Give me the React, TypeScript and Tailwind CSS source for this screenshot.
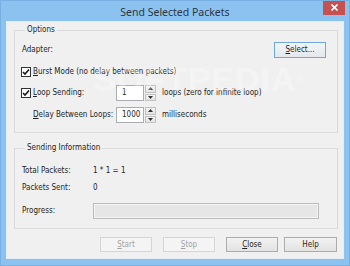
import React from 'react';

const font = "font-['DejaVu_Sans_Condensed','Liberation_Sans',sans-serif]";

const Check = () => (
  <span className="w-[10px] h-[10px] border border-[#333333] bg-white flex items-center justify-center shrink-0">
    <svg width="8" height="8" viewBox="0 0 8 8">
      <path d="M1 4 L3 6 L7 1.5" fill="none" stroke="#1a1a1a" strokeWidth="1.6" />
    </svg>
  </span>
);

const Spin = ({ value }: { value: string }) => (
  <div className="flex h-[16px] w-[40px] shrink-0">
    <div className="flex-1 border border-[#abadb3] bg-white pl-[5px] flex items-center text-[#1e1e1e]">{value}</div>
    <div className="w-[11px] ml-[1px] flex flex-col gap-[1px]">
      <div className="flex-1 border border-[#c2c2c2] bg-gradient-to-b from-[#f4f4f4] to-[#e4e4e4] flex items-center justify-center">
        <svg width="5" height="3" viewBox="0 0 5 3"><path d="M0 3 L2.5 0 L5 3 Z" fill="#333" /></svg>
      </div>
      <div className="flex-1 border border-[#c2c2c2] bg-gradient-to-b from-[#f4f4f4] to-[#e4e4e4] flex items-center justify-center">
        <svg width="5" height="3" viewBox="0 0 5 3"><path d="M0 0 L5 0 L2.5 3 Z" fill="#333" /></svg>
      </div>
    </div>
  </div>
);

const Button = ({ children, disabled, className = '' }: { children: React.ReactNode; disabled?: boolean; className?: string }) => (
  <div
    className={`h-[15px] w-[52px] flex items-center justify-center border ${
      disabled
        ? 'border-[#d5d5d5] bg-[#f4f4f4] text-[#a3a3a3]'
        : 'border-[#acacac] bg-gradient-to-b from-[#f2f2f2] to-[#e3e3e3] text-[#1e1e1e]'
    } ${className}`}
  >
    {children}
  </div>
);

export default function App() {
  return (
    <div className={`w-[350px] h-[266px] bg-[#8cc2f0] border border-[#78b0e4] flex flex-col text-[8px] leading-[10px] text-[#1e1e1e] relative overflow-hidden ${font}`}>
      {/* title bar */}
      <div className="h-[20px] grid grid-cols-[1fr_auto_1fr]">
        <div />
        <div className="font-['Noto_Sans',sans-serif] text-[10.5px] leading-[20px] text-[#2d3640] pt-[1px]">Send Selected Packets</div>
        <div className="flex justify-end items-start pr-[4px] -mt-[1px]">
          <div className="w-[22px] h-[15px] bg-[#c75050] flex items-center justify-center">
            <svg width="7" height="7" viewBox="0 0 7 7">
              <path d="M0.5 0.5 L6.5 6.5 M6.5 0.5 L0.5 6.5" stroke="#ffffff" strokeWidth="1.6" />
            </svg>
          </div>
        </div>
      </div>

      {/* client area */}
      <div className="mx-[5px] mb-[6px] flex-1 bg-[#f0f0f0] border border-[#e4edf6] flex flex-col">
        <fieldset className="ml-[7px] mr-[5px] mt-[2px] border border-[#dadada] pl-[7px] pr-[11px] pb-[9px]">
          <legend className="ml-[3px] px-[2px] leading-[12px]">Options</legend>
          <div className="mt-[6px] h-[16px] flex items-center justify-between">
            <span>Adapter:</span>
            <div className="h-[16px] w-[52px] border border-[#6fa8e0] bg-gradient-to-b from-[#f3f6f9] to-[#e4e8ec] flex items-center justify-center">
              <span><span className="underline">S</span>elect...</span>
            </div>
          </div>
          <div className="mt-[6px] h-[16px] flex items-center gap-[2px] -ml-[1px]">
            <Check />
            <span><span className="underline">B</span>urst Mode (no delay between packets)</span>
          </div>
          <div className="mt-[5px] h-[16px] flex items-center">
            <div className="w-[95px] flex items-center gap-[2px] -ml-[1px]">
              <Check />
              <span><span className="underline">L</span>oop Sending:</span>
            </div>
            <Spin value="1" />
            <span className="ml-[6px]">loops (zero for infinite loop)</span>
          </div>
          <div className="mt-[6px] h-[16px] flex items-center">
            <div className="w-[94px] pl-[11px]">
              <span className="underline">D</span>elay Between Loops:
            </div>
            <Spin value="1000" />
            <span className="ml-[6px]">milliseconds</span>
          </div>
        </fieldset>

        <fieldset className="ml-[7px] mr-[5px] mt-[9px] border border-[#dadada] pl-[7px] pb-[9px]">
          <legend className="ml-[3px] px-[2px] leading-[12px]">Sending Information</legend>
          <div className="mt-[9px] h-[16px] flex items-center">
            <span className="w-[71px]">Total Packets:</span>
            <span>1 * 1 = 1</span>
          </div>
          <div className="mt-[1px] h-[16px] flex items-center">
            <span className="w-[71px]">Packets Sent:</span>
            <span>0</span>
          </div>
          <div className="mt-[7px] h-[16px] flex items-center">
            <span className="w-[71px]">Progress:</span>
            <div className="w-[226px] h-[16px] border border-[#bcbcbc] bg-[#e6e6e6] shadow-[inset_0_0_0_1px_#f4f4f4]" />
          </div>
        </fieldset>

        <div className="mt-[8px] mr-[6px] flex justify-end">
          <Button disabled><span><span className="underline">S</span>tart</span></Button>
          <Button disabled className="ml-[11px]"><span><span className="underline">S</span>top</span></Button>
          <Button className="ml-[11px]"><span><span className="underline">C</span>lose</span></Button>
          <Button className="ml-[6px] w-[53px]">Help</Button>
        </div>
      </div>

      {/* watermark */}
      <div className="absolute left-[92px] top-[58px] pointer-events-none font-['Liberation_Sans',sans-serif] font-bold text-[34px] leading-[40px] tracking-[1px] text-white opacity-30">
        SOFTPEDIA<span className="text-[9px] align-top">®</span>
      </div>
    </div>
  );
}
